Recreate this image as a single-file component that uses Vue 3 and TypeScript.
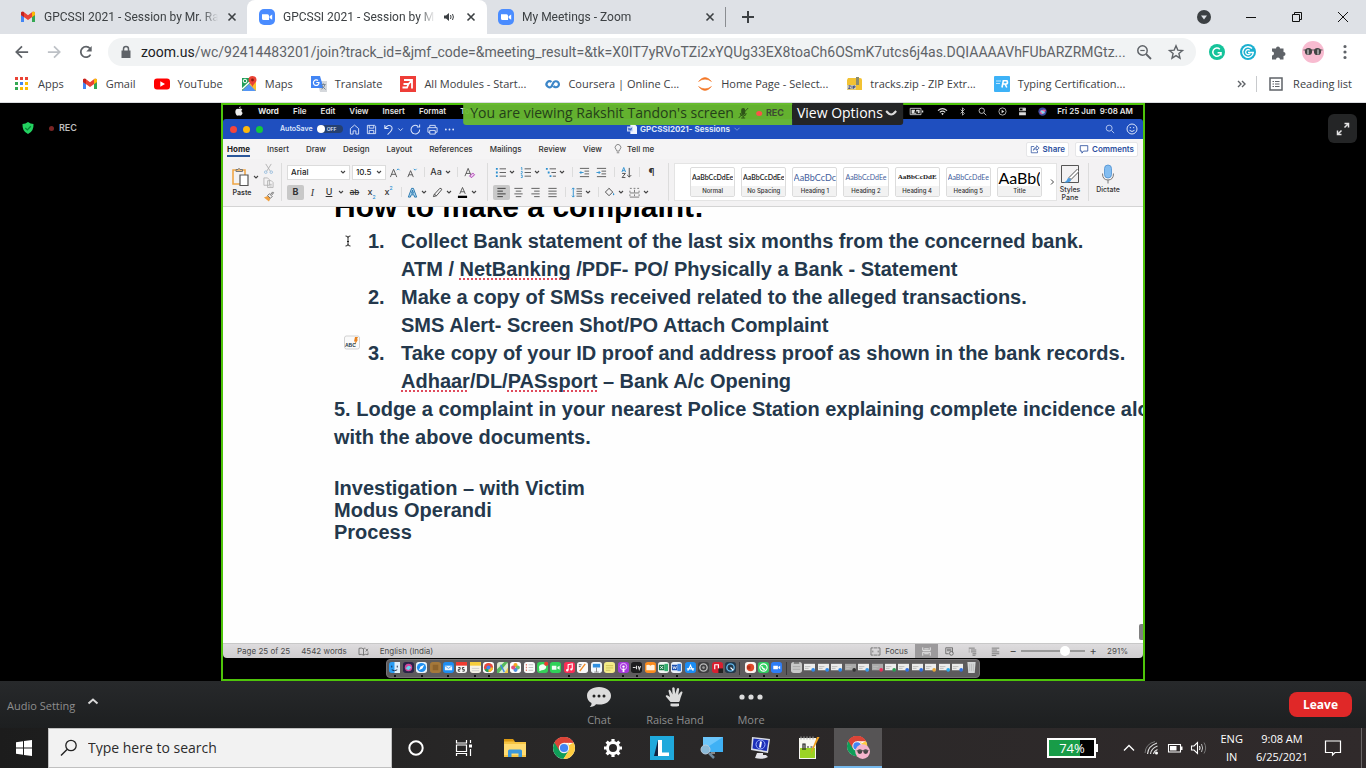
<script setup lang="ts">
import { h } from 'vue'

type Shape = [d: string, color: string, stroke?: number]
interface Art { box: string; shapes: Shape[] }

const INK = '#444'
const BLUE = '#2b8fd0'
const GREY = '#5f6368'

const circle = (cx: number, cy: number, r: number): string =>
  `M${cx - r} ${cy}a${r} ${r} 0 1 0 ${2 * r} 0a${r} ${r} 0 1 0 ${-2 * r} 0z`

const chromeShapes: Shape[] = [
  [circle(12, 12, 11), '#fff'],
  ['M12 12L2.5 6.5A11 11 0 0 1 21.5 6.5H12z', '#db4437'],
  ['M12 12L2.5 6.5A11 11 0 0 0 11.5 23L17 14.5z', '#0f9d58'],
  ['M12 12L21.5 6.6A11 11 0 0 1 11.4 23L16.8 14.5L16.5 7z', '#ffcd40'],
  ['M12 6.8H21.6A11 11 0 0 0 2.4 6.6L7.4 14.5z', '#db4437'],
  [circle(12, 12, 5.2), '#f1f1f1'],
  [circle(12, 12, 4.1), '#4285f4'],
]

const art: Record<string, Art> = {
  gmail: { box: '0 0 16 16', shapes: [
    ['M1 4v9h3V7.5z', '#4285f4'], ['M15 4v9h-3V7.5z', '#34a853'],
    ['M1 4.2C1 2.6 2.7 2.3 3.8 3L8 6.2 12.2 3C13.3 2.3 15 2.6 15 4.2V6L8 11 1 6z', '#ea4335'],
    ['M1 4.2C1 3 2.4 2.4 4 3.2V8L1 6z', '#c5221f'], ['M15 4.2C15 3 13.600 2.4 12 3.2V8l3-2z', '#fbbc04'],
  ] },
  zoom: { box: '0 0 16 16', shapes: [
    ['M5 0h6a5 5 0 0 1 5 5v6a5 5 0 0 1-5 5H5a5 5 0 0 1-5-5V5a5 5 0 0 1 5-5z', '#4a8cff'],
    ['M3 5.200h5.500a1.500 1.500 0 0 1 1.500 1.500V11H4.500A1.500 1.500 0 0 1 3 9.500zM10.600 7.200L13.200 5.400V10.800L10.600 9z', '#fff'],
  ] },
  close: { box: '0 0 12 12', shapes: [['M2.500 2.500L9.500 9.500M9.500 2.500L2.500 9.500', '#3c4043', 1.6]] },
  sound: { box: '0 0 12 12', shapes: [['M1 4.500h2L6 2v8L3 7.500H1z', '#3c4043'], ['M7.500 4Q8.600 6 7.500 8M9.500 3Q11.300 6 9.500 9', '#3c4043', 1]] },
  plus: { box: '0 0 14 14', shapes: [['M7 1v12M1 7h12', '#3c4043', 2]] },
  badge: { box: '0 0 14 14', shapes: [[circle(7, 7, 7), '#3c4043'], ['M4 5.500h6L7 9.500z', '#dee1e6']] },
  min: { box: '0 0 12 12', shapes: [['M1 6.500h10', '#111', 1]] },
  restore: { box: '0 0 12 12', shapes: [['M1.500 3.500h7v7h-7zM3.500 3.500v-2h7v7h-2', '#111', 1]] },
  shut: { box: '0 0 12 12', shapes: [['M1 1L11 11M11 1L1 11', '#111', 1]] },
  back: { box: '0 0 16 16', shapes: [['M15 8H2M8 1.500L1.500 8L8 14.500', '#5f6368', 2]] },
  forward: { box: '0 0 16 16', shapes: [['M1 8H14M8 1.500L14.500 8L8 14.500', '#bdc1c6', 2]] },
  reload: { box: '0 0 16 16', shapes: [['M13.200 11A6 6 0 1 1 12.600 4', '#5f6368', 2], ['M14.500 1v6.300H8.300z', '#5f6368']] },
  lock: { box: '0 0 12 14', shapes: [['M1.500 5.500h9v7.500h-9z', '#5f6368'], ['M3.500 6V4a2.500 2.500 0 0 1 5 0V6', '#5f6368', 1.500]] },
  zoomout: { box: '0 0 16 16', shapes: [[circle(6.500, 6.500, 4.700), GREY, 1.500], ['M10 10L15 15', GREY, 1.800], ['M4.300 6.500h4.400', GREY, 1.200]] },
  star: { box: '0 0 16 16', shapes: [['M8 1.800L9.800 6.100L14.500 6.500L10.900 9.500L12 14.200L8 11.600L4 14.200L5.100 9.500L1.500 6.500L6.200 6.100z', GREY, 1.400]] },
  gramA: { box: '0 0 16 16', shapes: [[circle(8, 8, 8), '#15c39a'], ['M10.800 5.200A4.100 4.100 0 1 0 12 8.800H8.600M12 8.800V11.500', '#fff', 1.500]] },
  gramB: { box: '0 0 16 16', shapes: [[circle(8, 8, 8), '#1bb0d0'], ['M12 4.500A5.300 5.300 0 1 0 13.300 8.500H8', '#fff', 1.400], ['M9.800 6.300A2.500 2.500 0 1 0 10.300 9.500', '#fff', 1.200]] },
  puzzle: { box: '0 0 16 16', shapes: [['M1 4.500H5A2 2 0 1 1 9 4.500H12.500V8A2 2 0 1 1 12.500 12V15.500H9A2 2 0 1 0 5 15.500H1V11.500A2 2 0 1 0 1 7.500z', GREY]] },
  face: { box: '0 0 22 22', shapes: [[circle(11, 11, 11), '#f8bbd0'], ['M1.500 9h19', '#555', 1], [circle(6.500, 10.500, 3.600), '#444'], [circle(15.500, 10.500, 3.600), '#444'], ['M5 8.500h2v5H5z M15 8.500h2v5h-2z', '#999']] },
  dots: { box: '0 0 4 16', shapes: [[circle(2, 2.500, 1.600) + circle(2, 8, 1.600) + circle(2, 13.500, 1.600), GREY]] },
  apps: { box: '0 0 16 16', shapes: [
    ['M1 1h3v3H1zM6 1h3v3H6zM11 1h3v3h-3z', '#ea4335'], ['M1 6h3v3H1z', '#34a853'], ['M6 6h3v3H6z', '#4285f4'],
    ['M11 6h3v3h-3z', '#fbbc04'], ['M1 11h3v3H1z', '#34a853'], ['M6 11h3v3H6zM11 11h3v3h-3z', '#fbbc04'],
  ] },
  youtube: { box: '0 0 16 16', shapes: [['M3 2.500h10a3 3 0 0 1 3 3v5a3 3 0 0 1-3 3H3a3 3 0 0 1-3-3v-5a3 3 0 0 1 3-3z', '#f00'], ['M6.300 5.200L11 8L6.300 10.800z', '#fff']] },
  maps: { box: '0 0 16 16', shapes: [
    ['M1 2h14v13H1z', '#1e9e58'], ['M1 15L15 2V15z', '#fbc02d'], ['M1 15L8 8L15 15z', '#5596f5'], ['M1 13L13 2', '#fff', 1.500],
    ['M11.500 0a4 4 0 0 1 4 4c0 2.500-3 3.500-4 7c-1-3.500-4-4.500-4-7a4 4 0 0 1 4-4z', '#ea4335'], [circle(11.500, 4, 1.400), '#8c1a10'], [circle(4, 5, 1.800), '#fff', 1],
  ] },
  translate: { box: '0 0 16 16', shapes: [['M6 5h10v11H9z', '#d5d8dc'], ['M0 0h9l3.500 12H0z', '#4285f4'], ['M7 4.500A2.800 2.800 0 1 0 8 6.500H5.300', '#fff', 1.200], ['M10.500 8.500h4M12.500 7.500v1M14 8.500Q13 12 10.500 13M11 10L14.500 13.500', '#7b8794', 1]] },
  modules: { box: '0 0 16 16', shapes: [['M0 0h16v16H0z', '#ee3e38'], ['M4 4H12V12.500M12 4L8.500 8H3.500M8.500 8L7 11.500H2.500', '#fff', 1.800]] },
  coursera: { box: '0 0 16 16', shapes: [['M7.500 6A3 3 0 1 0 7.500 10.500L9.500 6.500A3 3 0 1 1 9.500 10', '#3c86c8', 2.200]] },
  jupyter: { box: '0 0 16 16', shapes: [['M1.500 5.500Q8-2.500 14.500 5.500Q8 .8 1.500 5.500zM1.500 10.500Q8 18.500 14.500 10.500Q8 15.200 1.500 10.500z', '#f37726', 0.500], ['M1.500 5.500Q8-2.500 14.500 5.500Q8 .8 1.500 5.500zM1.500 10.500Q8 18.500 14.500 10.500Q8 15.200 1.500 10.500z', '#f37726']] },
  zip: { box: '0 0 16 16', shapes: [['M2 2h12a2 2 0 0 1 2 2v10H1V4z', '#f2c233'], ['M10 1h3v8h-3z', '#8b8b6e'], ['M1 9h9v4.500H1z', '#d9d3b0'], ['M2.500 9.800h2L2.500 12.500h2M6 9.800v2.800M7.500 12.800V10h1.500v1.300H7.500', '#3b4a8c', 0.900]] },
  typing: { box: '0 0 16 16', shapes: [['M1 0h14a1 1 0 0 1 1 1v14a1 1 0 0 1-1 1H1a1 1 0 0 1-1-1V1a1 1 0 0 1 1-1z', '#3db2f7'], ['M2 5h5M2 7.500h4', '#bfe5ff', 1.200], ['M8 11.500L9.300 4.800H13Q14.200 6.800 12.500 8H9M11 8L12.800 11.500', '#fff', 1.600]] },
  more: { box: '0 0 10 10', shapes: [['M1 2L4 5L1 8M5 2L8 5L5 8', GREY, 1.400]] },
  reading: { box: '0 0 14 14', shapes: [['M1 1h12v12H1z', GREY, 1.500], ['M3.500 4.500h1.500M3.500 7h1.500M3.500 9.500h1.500M6 4.500h4.500M6 7h4.500M6 9.500h4.500', GREY, 1.200]] },
  shield: { box: '0 0 12 12', shapes: [['M6 0Q8.500 1.800 11.500 2Q12 9.500 6 12Q0 9.500 .5 2Q3.500 1.800 6 0z', '#23d160'], ['M3.300 6L5.300 7.900L8.800 4.300', '#083', 1.300]] },
  expand: { box: '0 0 14 14', shapes: [['M8.500 1.500H12.500V5.500M12 2L8.500 5.500M5.500 12.500H1.500V8.500M2 12L5.500 8.500', '#e4e4e4', 1.500]] },
  apple: { box: '0 0 12 12', shapes: [['M6 3.500Q8 2.400 10 3.900Q7.700 6 10.400 8.300Q9 12 7.300 11.500Q6 11 4.700 11.500Q2.500 12 1.600 7.500Q1.500 2.800 6 3.500zM6 2.800Q6 .8 8 .2Q8.200 2.300 6 2.800z', '#eee']] },
  battery: { box: '0 0 16 10', shapes: [['M1 1.500h12v7H1z', '#ccc', 1], ['M2.500 3h4L5.500 6.500h3l-1 1H2.500zM8 3h3.500v4H9L10 5H7zM14 4h1.500v2H14z', '#ddd']] },
  wifi: { box: '0 0 12 10', shapes: [['M1 4Q6-.5 11 4M3 6Q6 3.300 9 6', '#ddd', 1.300], ['M4.500 7.300Q6 6.200 7.500 7.300L6 9.300z', '#ddd']] },
  bt: { box: '0 0 8 12', shapes: [['M1.500 3.500L6.500 8.500L4 11V1L6.500 3.500L1.500 8.500', '#ddd', 1]] },
  find: { box: '0 0 12 12', shapes: [[circle(5, 5, 3.600), '#ddd', 1.100], ['M7.800 7.800L11 11', '#ddd', 1.100]] },
  play: { box: '0 0 12 12', shapes: [[circle(6, 6, 4.800), '#ddd', 1], ['M4.800 3.800L8.300 6L4.800 8.200z', '#ddd']] },
  control: { box: '0 0 12 12', shapes: [['M2 1.500h8v3.500H2z', '#ddd', 1], ['M1.500 7h9v4h-9zM6 1.500h4v3H6z', '#ddd']] },
  siri: { box: '0 0 12 12', shapes: [[circle(6, 6, 5.500), '#3c4aa0'], ['M2 7Q5 2 10.500 4Q8 10 4 9.500z', '#e0609e'], ['M3 5Q7 4 9.500 8L6 9z', '#8ad8ef']] },
  home: { box: '0 0 12 12', shapes: [['M1.500 5L6 1.200L10.500 5V11H7.500V7.500h-3V11H1.500z', '#dbe5fa', 1]] },
  save: { box: '0 0 12 12', shapes: [['M1.500 1.500H9.500L10.500 2.500V10.500H1.500zM3.500 1.500V4.500H8.500V1.500M3.500 10.500V7H8.500V10.500', '#dbe5fa', 1]] },
  undo: { box: '0 0 12 12', shapes: [['M2 1V5H6M2 5Q6-.5 9.500 3Q11.500 6 5 11.500', '#dbe5fa', 1.100]] },
  redo: { box: '0 0 12 12', shapes: [['M10.500 6A4.700 4.700 0 1 1 8.500 2.300M10.500 0.500V3.200H7.500', '#dbe5fa', 1.100]] },
  print: { box: '0 0 12 12', shapes: [['M3 4V1.500H9V4M3 9H1V4H11V9H9M3 7H9V11H3z', '#dbe5fa', 1]] },
  ellipsis: { box: '0 0 12 12', shapes: [[circle(2, 6, 1) + circle(6, 6, 1) + circle(10, 6, 1), '#dbe5fa']] },
  docfile: { box: '0 0 12 12', shapes: [['M4 0h5l3 3v9H4z', '#f1f5ff'], ['M0 3h7v6H0z', '#c5d5f7'], ['M1.300 4.500L2.500 7.700L3.500 5L4.500 7.700L5.700 4.500', '#1e4dbb', 0.900]] },
  smile: { box: '0 0 12 12', shapes: [[circle(6, 6, 5), '#dbe5fa', 1], ['M3.500 7.300Q6 9.700 8.500 7.300M4.300 4v1.200M7.700 4v1.200', '#dbe5fa', 1]] },
  searchw: { box: '0 0 12 12', shapes: [[circle(5, 5, 3.600), '#b9cbf2', 1.100], ['M7.800 7.800L11 11', '#b9cbf2', 1.100]] },
  bulb: { box: '0 0 10 12', shapes: [['M3.500 8.500Q3.500 7.300 2.500 6.300A3.400 3.400 0 1 1 7.500 6.300Q6.500 7.300 6.500 8.500zM3.500 10.500H6.500', '#666', 0.900]] },
  share: { box: '0 0 12 12', shapes: [['M5 3H1.500V10.500H9V8M4 7.500Q4.500 4 8 4V2L11 4.800L8 7.500V5.800Q5.500 5.500 4 7.500z', '#2b4f9e', 0.900]] },
  comment: { box: '0 0 12 12', shapes: [['M1.500 2H10.500V8.500H5.500L3.500 11V8.500H1.500z', '#2b4f9e', 1]] },
  paste: { box: '0 0 20 20', shapes: [['M2 3h12v14H2z', '#f0a646', 1.600], ['M5 4.500V2.500H7Q8 0 9 2.500H11.500V4.500z', '#777', 1], ['M9 8h8v10.500H9z', '#fff'], ['M9 8h8v10.500H9z', '#555', 1.200]] },
  cut: { box: '0 0 12 12', shapes: [['M3 1L8 9M9 1L4 9', '#aaa', 0.900], [circle(3, 10, 1.400) + circle(9, 10, 1.400), '#8fb8dc', 0.900]] },
  copy: { box: '0 0 12 12', shapes: [['M1 1H5L7 3V9H1zM5 4H9L11 6V11.500H5zM7 8h2.500M7 9.800h2.500', '#b0b0b0', 0.900]] },
  brush: { box: '0 0 12 12', shapes: [['M1 7L5 5.500L8 8.500L6.500 11.500z', '#f0a040'], ['M5 5L7 3L8 4L10.500 1L11.500 2L9 5L10 6L8 8z', '#555', 0.900]] },
  growA: { box: '0 0 12 12', shapes: [['M1.500 11L5 2.500L8.500 11M2.700 8h4.600', INK, 0.900], ['M8.500 3.500L10 2L11.500 3.500', BLUE, 1]] },
  shrinkA: { box: '0 0 12 12', shapes: [['M2 11L5 4L8 11M3 8.500h4', INK, 0.900], ['M8.500 2L10 3.500L11.500 2', BLUE, 1]] },
  clear: { box: '0 0 12 12', shapes: [['M1 10L4.500 1.500L8 10M2.200 7h4.600', INK, 0.900], ['M6 10L9.500 6.500L11.500 8.500L8.500 11.500z', '#f0c8f0'], ['M6 10L9.500 6.500L11.500 8.500L8.500 11.500z', '#a83bb0', 1]] },
  effect: { box: '0 0 12 12', shapes: [['M1.500 11L5 1.500H7L10.500 11H8.300L7.500 8.500H4.500L3.700 11z', '#bfe0f4'], ['M1.500 11L5 1.500H7L10.500 11H8.300L7.500 8.500H4.500L3.700 11zM5 6.800H7L6 3.500z', '#1a6ea8', 1]] },
  pen: { box: '0 0 12 12', shapes: [['M2.500 8L8.500 1.500Q10.500 1 10.500 3L5 9.500zM2.500 8L1.500 10.500L5 9.500', INK, 1]] },
  color: { box: '0 0 12 12', shapes: [['M3 7.500L6 0.500L9 7.500M4 5.200h4', INK, 0.900], ['M1 9.500h10v2.500H1z', '#000']] },
  bullets: { box: '0 0 12 12', shapes: [['M1 1h2v2H1zM1 5h2v2H1zM1 9h2v2H1z', BLUE], ['M5 2h7M5 6h7M5 10h7', INK, 0.900]] },
  numbers: { box: '0 0 12 12', shapes: [['M1 1L2 .5V3.500M1 5H2.500V6L1 7.500H2.500M1 9H2.500V11.500H1', BLUE, 0.900], ['M5 2h7M5 6h7M5 10h7', INK, 0.900]] },
  levels: { box: '0 0 12 12', shapes: [['M1 1h2v2H1zM3 5h2v2H3zM5 9h2v2H5z', BLUE], ['M5 2h7M7 6h5M8.500 10h3.500', INK, 0.900]] },
  outdent: { box: '0 0 12 12', shapes: [['M1 1.500h10M6 4.500h5M6 7.500h5M1 10.500h10', INK, 0.900], ['M5 6H1M2.500 4.500L1 6L2.500 7.500', BLUE, 1]] },
  indent: { box: '0 0 12 12', shapes: [['M1 1.500h10M6 4.500h5M6 7.500h5M1 10.500h10', INK, 0.900], ['M.5 6H4.500M3 4.500L4.500 6L3 7.500', BLUE, 1]] },
  sort: { box: '0 0 12 12', shapes: [['M1 5.500L3 .5L5 5.500M1.800 4h2.400', BLUE, 1], ['M1.200 7H4.800L1.200 11.500H4.800M9 1V11M6.800 8.800L9 11L11.200 8.800', INK, 1]] },
  left: { box: '0 0 12 12', shapes: [['M1.500 1.500h9M1.500 4.500h6M1.500 7.500h9M1.500 10.500h6', '#222', 0.900]] },
  center: { box: '0 0 12 12', shapes: [['M1.500 1.500h9M3 4.500h6M1.500 7.500h9M3 10.500h6', INK, 0.900]] },
  right: { box: '0 0 12 12', shapes: [['M1.500 1.500h9M4.500 4.500h6M1.500 7.500h9M4.500 10.500h6', INK, 0.900]] },
  justify: { box: '0 0 12 12', shapes: [['M1.500 1.500h9M1.500 4.500h9M1.500 7.500h9M1.500 10.500h9', INK, 0.900]] },
  spacing: { box: '0 0 12 12', shapes: [['M2.500 1V11M1 2.500L2.500 1L4 2.500M1 9.500L2.500 11L4 9.500', BLUE, 1], ['M6 2h6M6 4.700h6M6 7.400h6M6 10h6', INK, 0.900]] },
  shading: { box: '0 0 12 12', shapes: [['M5 1L9.500 5.500L5.500 9.500L1.500 5.500L5.500 1.500', INK, 1], ['M10.500 6Q12 9 10.500 9Q9 9 10.500 6z', BLUE]] },
  borders: { box: '0 0 12 12', shapes: [['M1 1.500h2M5 1.500h2M9 1.500h2M1 4v2M11 4v2M6 3v3M1 8v2M6 8v2M11 8v2M1 6.500h10M1 11h10', '#666', 0.900]] },
  stylepane: { box: '0 0 20 20', shapes: [['M1.500 1.500H18.500V18.500H1.500z', '#555', 1], ['M17.500 5L9 13.500L11 15.500L18.500 8z', '#fff'], ['M17.500 5L9 13.500L11 15.500L18.500 8', '#555', 1], ['M4 18.500Q7 17 8 14Q11 14 11 16.500Q9.500 19 4 18.500z', '#4a9be0']] },
  mic: { box: '0 0 16 20', shapes: [['M8 1a3.500 3.500 0 0 1 3.500 3.500v6a3.500 3.500 0 0 1-7 0v-6A3.500 3.500 0 0 1 8 1z', '#83bdf0'], ['M8 1a3.500 3.500 0 0 1 3.500 3.500v6a3.500 3.500 0 0 1-7 0v-6A3.500 3.500 0 0 1 8 1z', '#4b8fd0', 0.800], ['M2.500 9.500Q2.500 16 8 16Q13.500 16 13.500 9.500M8 16V19.500', '#777', 1]] },
  chev: { box: '0 0 8 8', shapes: [['M2 3L4 5L6 3', '#444', 1.100]] },
  chevw: { box: '0 0 8 8', shapes: [['M1.500 2.800L4 5.300L6.500 2.800', '#c8d6f5', 1.100]] },
  chevfaint: { box: '0 0 8 8', shapes: [['M1.500 2.800L4 5.300L6.500 2.800', '#6f8fda', 1]] },
  chevr: { box: '0 0 8 8', shapes: [['M3 1.500L5.500 4L3 6.500', '#444', 1]] },
  chevbig: { box: '0 0 12 12', shapes: [['M1 4Q4 7.500 6 7.500Q8 7.500 11 4', '#ddd', 2]] },
  up: { box: '0 0 12 12', shapes: [['M1.500 7.500L6 3.500L10.500 7.500', '#d8d8d8', 2]] },
  mute: { box: '0 0 12 12', shapes: [['M6 1a2 2 0 0 1 2 2v3a2 2 0 0 1-4 0V3a2 2 0 0 1 2-2z', '#2e5418'], ['M3 6Q3 9 6 9Q9 9 9 6M6 9v2M4 11h4M11 1L1.500 11', '#2e5418', 1]] },
  book: { box: '0 0 12 10', shapes: [['M6 2Q3.500.5 1 1.500V8.500Q3.500 7.500 6 9zM6 2Q7 1.200 8 1.200M6 9Q8 7.500 11 8.500V6M8.500 2L11 5M11 2L8.500 5', '#666', 0.900]] },
  focus: { box: '0 0 12 10', shapes: [['M3.500 1H1V9H3.500M8.500 1H11V9H8.500M4 1h4M4 9h4', '#666', 0.900], ['M3 4v2M9 4v2', '#666', 0.900]] },
  vprint: { box: '0 0 12 12', shapes: [['M1 .5V4.500H11V.5M1 11.500V7H11V11.500M3 2.500h6M3 9h6', '#fff', 1]] },
  vweb: { box: '0 0 12 12', shapes: [['M1 1h9v6M1 1V9H5M2.500 3h6M2.500 5h6', '#555', 1], [circle(8.500, 8.500, 2.500), '#555', 1]] },
  voutline: { box: '0 0 12 12', shapes: [['M1 1.500h8M4 4h7M4 6.500h7M6 9h5M6 11h4M1 4h1M1 6.500h1', '#555', 0.900]] },
  vdraft: { box: '0 0 12 12', shapes: [['M1 1.500h10M1 4h7M1 6.500h10M1 9h10M1 11.300h6', '#555', 0.900]] },
  ibeam: { box: '0 0 8 12', shapes: [['M1.500 1Q4 1 4 2.500Q4 1 6.500 1M4 2V10M1.500 11Q4 11 4 9.500Q4 11 6.500 11M3 6.500h2', '#111', 0.900]] },
  bolt: { box: '0 0 16 14', shapes: [['M2 .5H13A2 2 0 0 1 15.500 2.500V11.500A2 2 0 0 1 13.500 13.500H2.500A2 2 0 0 1 .5 11.500V2.500A2 2 0 0 1 2 .5z', '#fafafa'], ['M2 .5H13A2 2 0 0 1 15.500 2.500V11.500A2 2 0 0 1 13.500 13.500H2.500A2 2 0 0 1 .5 11.500V2.500A2 2 0 0 1 2 .5z', '#c8c8c8', 0.800], ['M11 1.500H14L12.800 4H14L10.500 10L11.500 6H10z', '#e8821e']] },
  chat: { box: '0 0 24 20', shapes: [['M12 0C19 0 24 3.500 24 8.700C24 14 19 17.500 12 17.500L9 17.300Q7 20 2.800 20Q5 18.500 4.500 16Q0 13.500 0 8.700C0 3.500 5 0 12 0z', '#dcdcdc'], [circle(7, 9, 1.500) + circle(12, 9, 1.500) + circle(17, 9, 1.500), '#222']] },
  hand: { box: '0 0 20 20', shapes: [['M5.500 15Q3 12 .8 9.500Q.5 7.500 2.800 8.500L5 10L3.500 4Q4 2 5.500 3.500L7.500 7.500L7.200 1Q8.500-.5 9.600 1L10.200 7L12 1.500Q13.500.5 14.200 2L13.200 8L16 4.500Q17.500 4 17.500 5.500L15.500 11Q15 14 14 15z', '#dcdcdc'], ['M5.500 16.500h8.500v2.500Q9.500 20 5.500 19z', '#dcdcdc']] },
  moredots: { box: '0 0 24 8', shapes: [[circle(3, 4, 2.600) + circle(12, 4, 2.600) + circle(21, 4, 2.600), '#dcdcdc']] },
  windows: { box: '0 0 16 16', shapes: [['M0 2.300L7 1.300V7.500H0zM8 1.100L16 0V7.500H8zM0 8.500H7V14.700L0 13.700zM8 8.500H16V16L8 14.900z', '#fff']] },
  search: { box: '0 0 18 18', shapes: [[circle(11, 6.500, 5.200), '#222', 1.300], ['M7 10.500L1 16.500', '#222', 1.400]] },
  cortana: { box: '0 0 24 24', shapes: [[circle(12, 12, 6.700), '#fff', 2]] },
  taskview: { box: '0 0 24 24', shapes: [['M4.500 4v3H14.500V4M4.500 20V17.500H14.500V20M4.500 9h10v6.500h-10z', '#fff', 1.200], ['M18.500 4v3M18.500 13v7', '#fff', 1.200], ['M17 8.500h3v3h-3z', '#fff']] },
  explorer: { box: '0 0 24 24', shapes: [['M1 4h9l2 2h11v15H1z', '#f6c544'], ['M1 3h9l2 2.500H1z', '#dc9a12'], ['M1 8h22v11H1z', '#ffdc72'], ['M5 21V15Q5 13.500 6.500 13.500h11Q19 13.500 19 15V21H15.500V17.500H8.500V21z', '#3a97da']] },
  chrome: { box: '0 0 24 24', shapes: chromeShapes },
  chromeuser: { box: '0 0 26 26', shapes: [...chromeShapes, [circle(18, 18, 8), '#f5b5cd'], [circle(15, 18, 2.600) + circle(21.300, 18, 2.600), '#444'], ['M11.500 17h13', '#555', 1]] },
  gear: { box: '0 0 24 24', shapes: [[circle(12, 12, 5.500), '#fff', 3], ['M12 3v3M12 18v3M3 12h3M18 12h3M5.600 5.600L8 8M16 16L18.400 18.400M18.400 5.600L16 8M8 16L5.600 18.400', '#fff', 3.200]] },
  lapp: { box: '0 0 24 24', shapes: [['M0 0h24v24H0z', '#1fa9dc'], ['M8 4L4 20H12z', '#14213f'], ['M8 4h4v12.500h7V20H8z', '#fff']] },
  monitor: { box: '0 0 24 24', shapes: [['M4 1h20v15H4z', '#3fb1f5'], ['M4 1h20L4 14z', '#6cc6fb'], ['M12 16h4v2h-4z', '#888'], ['M10 17L15 22', '#6e8ba0', 2.500], [circle(6.500, 13.500, 4.500), '#8bbad8'], [circle(6.500, 13.500, 4.500), '#bcd', 1]] },
  info: { box: '0 0 24 24', shapes: [['M4 1L22 3L20 17L3 14z', '#d9dde6'], ['M5.500 2.500L20.500 4.300L18.800 15L4.500 12.500z', '#1c2fb8'], [circle(12.500, 8.500, 4.500), '#9db2ff', 1], ['M13 5.500L12 11.500', '#fff', 2], ['M9 17h6v2h3l2 2Q14 24 7 22z', '#e4e4ea']] },
  notepad: { box: '0 0 24 24', shapes: [['M2 2h17v21H2z', '#f7f7f2'], ['M3 12h15v10H3z', '#9bd324'], ['M4 .5v3M7 .5v3M10 .5v3M13 .5v3M16 .5v3', '#aaa', 1], ['M6 14V8h2v6M10 11h2M13.500 11h2', '#222', 1.200], ['M22.500 1L16 14L14 18L15 13L20 1z', '#f0a020']] },
  tray: { box: '0 0 16 16', shapes: [['M3 10.500L8 5.500L13 10.500', '#fff', 1.300]] },
  traywifi: { box: '0 0 16 16', shapes: [['M3.500 14Q4 6 13 3M6.500 14Q7 8.500 13.500 6M9.500 14Q10 11 13.500 9.500', '#ddd', 1.200], [circle(12.500, 13, 1.500), '#fff'], ['M1 13Q1.500 4 11 1.500', '#777', 1]] },
  traybat: { box: '0 0 16 16', shapes: [['M1.500 4.500H13.500V12H1.500z', '#fff', 1.100], ['M3 6H9.500V10.500H3zM14 6.500H15.500V10H14z', '#fff']] },
  traysound: { box: '0 0 18 16', shapes: [['M1.500 6H4L7.500 2.500V13.500L4 10H1.500z', '#fff', 1.100], ['M9.500 6Q10.500 8 9.500 10', '#fff', 1.100], ['M11.500 4Q13.800 8 11.500 12', '#bbb', 1], ['M14 2.500Q17.300 8 14 13.500', '#777', 1]] },
  notice: { box: '0 0 18 18', shapes: [['M1.500 2H16.500V13.500H11L8.500 16V13.500H1.500z', '#fff', 1.200]] },
}

// Renders one entry of the art table.
const Glyph = (props: { name: string }) =>
  h('svg', { viewBox: art[props.name].box, 'aria-hidden': 'true', class: 'glyph' },
    art[props.name].shapes.map(([d, color, stroke]) =>
      h('path', stroke ? { d, fill: 'none', stroke: color, 'stroke-width': stroke } : { d, fill: color })))
Glyph.props = ['name']

const tabs = [
  { icon: 'gmail', title: 'GPCSSI 2021 - Session by Mr. Rak', active: false, sound: false },
  { icon: 'zoom', title: 'GPCSSI 2021 - Session by Mr.', active: true, sound: true },
  { icon: 'zoom', title: 'My Meetings - Zoom', active: false, sound: false },
]

const bookmarks = [
  { icon: 'apps', label: 'Apps' }, { icon: 'gmail', label: 'Gmail' }, { icon: 'youtube', label: 'YouTube' },
  { icon: 'maps', label: 'Maps' }, { icon: 'translate', label: 'Translate' }, { icon: 'modules', label: 'All Modules - Start...' },
  { icon: 'coursera', label: 'Coursera | Online C...' }, { icon: 'jupyter', label: 'Home Page - Select...' },
  { icon: 'zip', label: 'tracks.zip - ZIP Extr...' }, { icon: 'typing', label: 'Typing Certification...' },
]

const url = '/wc/92414483201/join?track_id=&jmf_code=&meeting_result=&tk=X0IT7yRVoTZi2xYQUg33EX8toaCh6OSmK7utcs6j4as.DQIAAAAVhFUbARZRMGtz...'

const menus = ['Word', 'File', 'Edit', 'View', 'Insert', 'Format', 'Tools']
const menuIcons = ['battery', 'wifi', 'bt', 'find', 'play', 'control', 'siri']
const ribbonTabs = ['Home', 'Insert', 'Draw', 'Design', 'Layout', 'References', 'Mailings', 'Review', 'View']

interface Tool { id: string; text?: string; drop?: boolean; on?: boolean }
const SEP: Tool = { id: 'sep' }
const sizeTools: Tool[] = [{ id: 'growA' }, { id: 'shrinkA' }, SEP, { id: 'case', text: 'Aa', drop: true }, SEP, { id: 'clear' }]
const fontTools: Tool[] = [
  { id: 'bold', text: 'B', on: true }, { id: 'italic', text: 'I' }, { id: 'underline', text: 'U', drop: true },
  { id: 'strike', text: 'ab' }, { id: 'sub', text: 'x' }, { id: 'sup', text: 'x' }, SEP,
  { id: 'effect', drop: true }, { id: 'pen', drop: true }, { id: 'color', drop: true },
]
const listTools: Tool[] = [
  { id: 'bullets', drop: true }, { id: 'numbers', drop: true }, { id: 'levels', drop: true }, SEP,
  { id: 'outdent' }, { id: 'indent' }, SEP, { id: 'sort' }, SEP, { id: 'pilcrow', text: '¶' },
]
const alignTools: Tool[] = [
  { id: 'left', on: true }, { id: 'center' }, { id: 'right' }, { id: 'justify' }, SEP,
  { id: 'spacing', drop: true }, SEP, { id: 'shading', drop: true }, { id: 'borders', drop: true },
]
const styles = [
  { name: 'Normal', sample: 'AaBbCcDdEe', kind: 'plain' }, { name: 'No Spacing', sample: 'AaBbCcDdEe', kind: 'plain' },
  { name: 'Heading 1', sample: 'AaBbCcDc', kind: 'h1' }, { name: 'Heading 2', sample: 'AaBbCcDdEe', kind: 'h2' },
  { name: 'Heading 4', sample: 'AaBbCcDdE', kind: 'h4' }, { name: 'Heading 5', sample: 'AaBbCcDdEe', kind: 'h5' },
  { name: 'Title', sample: 'AaBb(', kind: 'title' },
]

interface DockItem { bg: string; marks?: Shape[]; dot?: boolean; kind?: 'sep' | 'window' | 'bare' }
const dock: DockItem[] = [
  { bg: '#2a9df4', marks: [['M6 0h6v12H6z', '#dfeefa'], ['M3 4v2M9 4v2M3 8.500Q6 10.500 9 8.500', '#124', 1]], dot: true },
  { bg: '#2b2347', marks: [[circle(6, 6, 4), '#d2479b'], ['M3 7Q6 2 9 6L6 9z', '#68d5ee']] },
  { bg: '#e8f2fb', marks: [[circle(6, 6, 5), '#1f8ff0'], ['M9 3L7 7L3 9L5 5z', '#fff']], dot: true },
  { bg: '#a5783a', marks: [['M3 3h6v6H3z', '#8d632c']] },
  { bg: '#1e8df2', marks: [['M2 4h8v5H2z', '#e8f4ff'], ['M2 4L6 7L10 4', '#5aa9ee', 1]], dot: true },
  { bg: '#f7f7f7', marks: [['M0 0h12v4H0z', '#ee3b30'], ['M2.500 6h2v2h-2v2h2M9 6H7v2h2v2H7', '#333', 1]] },
  { bg: '#f5f2e6', marks: [['M0 0h12v4H0z', '#f5cd3c'], ['M2 7h8M2 9.500h8', '#ccc', 1]], dot: true },
  { bg: '#fff', marks: [[circle(6, 6, 5), '#e74a3c'], ['M6 6L1.500 8.500A5 5 0 0 0 6.500 11z', '#1ea362'], ['M6 6L11 6A5 5 0 0 1 6 11z', '#fbc02d'], [circle(6, 6, 2.300), '#4285f4']], dot: true },
  { bg: '#dcebd0', marks: [['M0 8L8 0H12L2 12H0z', '#56b95c'], ['M8 12L12 6V12z', '#f0c94b'], ['M4 3L8 11', '#3f87e8', 1.500]] },
  { bg: '#fff', marks: [[circle(6, 3.500, 2.300), '#f5a623'], [circle(8.500, 6, 2.300), '#6ac36a'], [circle(6, 8.500, 2.300), '#4a90e2'], [circle(3.500, 6, 2.300), '#e0507a']] },
  { bg: '#fafafa', marks: [['M2 3h1M2 6h1M2 9h1', '#e0503a', 1.500], ['M5 3h5M5 6h5M5 9h5', '#bbb', 1]] },
  { bg: '#35d058', marks: [['M6 2.500Q10.500 3 10 6Q9 9 5 9L2.500 10V8Q1 3 6 2.500z', '#f0fff3'], [circle(10, 2, 2.300), '#f03a2e']] },
  { bg: '#2fd158', marks: [['M2 4h5v4.500H2zM8 5.500L10.500 4V8.500L8 7z', '#f0fff3']] },
  { bg: '#fb2d55', marks: [['M4.500 9V3L9 2V8', '#fff', 1.200], [circle(3.500, 9, 1.300) + circle(8, 8, 1.300), '#fff']], dot: true },
  { bg: '#fafafa', marks: [['M3 10L9 2', '#f08a24', 1.500], ['M2 3h3M2 5h2', '#555', 1]] },
  { bg: '#f3f8fd', marks: [['M2 2h8v4H2z', '#2f8fe0'], ['M6 6V11M3.500 11h5', '#888', 1]] },
  { bg: '#f4ec88', marks: [['M2 4h8M2 6.500h8M2 9h5', '#c9bd52', 1]] },
  { bg: '#a537dc', marks: [[circle(6, 5, 3.500), '#edc8ff', 1], [circle(6, 5, 1.300), '#fff'], ['M5 7h2v4H5z', '#fff']], dot: true },
  { bg: '#1d1d1f', marks: [['M2 6h3M6 4v4M8 4.500L9 8L10.500 4.500', '#ddd', 1.200]], dot: true },
  { bg: '#fb8c1e', marks: [['M1.500 3.500Q4 2.500 6 4Q8 2.500 10.500 3.500V9H1.500z', '#fff3e2']] },
  { bg: '#f2f7f3', marks: [['M1 3h6v6H1z', '#157a44'], ['M7 2h4v8H7z', '#34b06f'], ['M2.500 4.500L5.500 7.500M5.500 4.500L2.500 7.500', '#fff', 1]], dot: true },
  { bg: '#edf3fb', marks: [['M1 3h6v6H1z', '#1c4fb0'], ['M7 2h4v8H7z', '#3c82e0'], ['M2 4.500L3 7.500L4 5L5 7.500L6 4.500', '#fff', 0.800]], dot: true },
  { bg: '#1b8df5', marks: [['M3 9.500L6.500 3M9 9.500L5.500 3M2 7.500h8', '#fff', 1.200]] },
  { bg: '#3e3e40', marks: [[circle(6, 6, 4), '#bbb', 1.500], [circle(6, 6, 1.500), '#999']] },
  { bg: '#d81f30', marks: [['M3 8V3H7V7', '#fff', 1.300], ['M7 7h5v5H7z', '#222']] },
  { bg: '#22384a', marks: [[circle(6, 6, 4), '#64b8ec', 1.500], ['M6 6L9 9', '#fff', 1.200]] },
  { bg: 'none', kind: 'sep' },
  { bg: '#fbf3f0', marks: [[circle(6, 6, 4), '#e0492a'], ['M2 4h4v4H2z', '#b8321a']], dot: true },
  { bg: '#2fcf5f', marks: [[circle(6, 6, 4), '#fff', 1.200], ['M4 4.500Q5 8 8 8', '#fff', 1.500]], dot: true },
  { bg: '#2f7df6', marks: [['M2.500 4h5v4h-5zM8 5.500L10 4V8L8 6.500z', '#fff']], dot: true },
  { bg: 'none', kind: 'sep' },
  { bg: '#c9c9c9', marks: [['M3 0h6v2H3z', '#777'], ['M2 5h8M2 8h8', '#aaa', 1]] },
  ...['#2f88e8', '#2f88e8', '#2f88e8', '#333', '#3b9ae8', '#e82f5a', '#2a9d50', '#2f6fe0', '#2f6fe0', '#e8a83a', '#2fa9e8', '#2f6fe0']
    .map((c, i): DockItem => ({ bg: i === 3 || i === 5 ? '#aaa' : '#ececec', kind: 'window', marks: [['M1 5h6M1 7h4', '#bbb', 1], [circle(10, 8.500, 2), c]] })),
  { bg: 'none', kind: 'bare', marks: [['M1.500 0h9L9.500 12h-7z', '#d4d6d8'], ['M4 2v8M6 2v8M8 2v8', '#aaa', 0.600]] },
]

const taskApps = ['explorer', 'chrome', 'gear', 'lapp', 'monitor', 'info', 'notepad', 'chromeuser']
</script>

<template>
  <div class="screen">
    <header class="browser">
      <div class="tabstrip">
        <div v-for="(t, i) in tabs" :key="i" class="tab" :class="{ active: t.active, last: i === 2 }">
          <Glyph :name="t.icon" class="i16" />
          <span class="tab-title">{{ t.title }}</span>
          <Glyph v-if="t.sound" name="sound" class="i12 tab-sound" />
          <button class="bare tab-close" aria-label="Close tab"><Glyph name="close" class="i12" /></button>
        </div>
        <span class="tab-line"></span>
        <button class="bare new-tab" aria-label="New tab"><Glyph name="plus" class="i14" /></button>
        <div class="win-buttons">
          <button class="bare" aria-label="Search tabs"><Glyph name="badge" class="i14" /></button>
          <button class="bare" aria-label="Minimize"><Glyph name="min" class="i12" /></button>
          <button class="bare" aria-label="Restore"><Glyph name="restore" class="i12" /></button>
          <button class="bare" aria-label="Close"><Glyph name="shut" class="i12" /></button>
        </div>
      </div>

      <div class="toolbar">
        <button class="bare" aria-label="Back"><Glyph name="back" class="i14" /></button>
        <button class="bare" aria-label="Forward"><Glyph name="forward" class="i14" /></button>
        <button class="bare" aria-label="Reload"><Glyph name="reload" class="i14" /></button>
        <label class="address">
          <Glyph name="lock" class="lock" />
          <span class="host">zoom.us</span>
          <input type="text" :value="url" aria-label="Address" />
          <Glyph name="zoomout" class="i16 zoom-out" />
          <Glyph name="star" class="i16 star" />
        </label>
        <div class="extensions">
          <button class="bare" aria-label="Grammarly"><Glyph name="gramA" class="i16" /></button>
          <button class="bare" aria-label="Go"><Glyph name="gramB" class="i16" /></button>
          <button class="bare" aria-label="Extensions"><Glyph name="puzzle" class="i16" /></button>
          <button class="bare" aria-label="Profile"><Glyph name="face" class="i22" /></button>
          <button class="bare" aria-label="Menu"><Glyph name="dots" class="i4" /></button>
        </div>
      </div>

      <nav class="bookmarks">
        <a v-for="b in bookmarks" :key="b.label" href="#" class="bookmark"><Glyph :name="b.icon" class="i16" />{{ b.label }}</a>
        <button class="bare overflow" aria-label="More bookmarks"><Glyph name="more" class="i10" /></button>
        <span class="book-line"></span>
        <button class="bare reading"><Glyph name="reading" class="i14" />Reading list</button>
      </nav>
    </header>

    <main class="meeting">
      <div class="rec-badge"><Glyph name="shield" class="i12" /><i class="rec-dot"></i>REC</div>
      <button class="bare expand" aria-label="Full screen"><Glyph name="expand" class="i14" /></button>

      <section class="share">
        <div class="mac-menu">
          <Glyph name="apple" class="i10" />
          <span v-for="m in menus" :key="m" class="mac-item">{{ m }}</span>
          <div class="mac-right">
            <Glyph v-for="m in menuIcons" :key="m" :name="m" class="mac-icon" />
            <span>Fri 25 Jun&nbsp; 9:08 AM</span>
          </div>
        </div>

        <div class="word-title">
          <div class="word-left">
            <i class="light red"></i><i class="light amber"></i><i class="light green"></i>
            <label class="autosave">AutoSave <input type="checkbox" /><span class="switch">OFF</span></label>
            <Glyph name="home" class="i12" /><Glyph name="save" class="i12" />
            <span class="undo"><Glyph name="undo" class="i12" /><Glyph name="chevw" class="i8" /></span>
            <Glyph name="redo" class="i12" /><Glyph name="print" class="i12" /><Glyph name="ellipsis" class="i12" />
          </div>
          <div class="word-name"><Glyph name="docfile" class="i10" />GPCSSI2021- Sessions<Glyph name="chevfaint" class="i8" /></div>
          <div class="word-right"><Glyph name="searchw" class="i10" /><Glyph name="smile" class="i12" /></div>
        </div>

        <div class="ribbon-tabs">
          <button v-for="(r, i) in ribbonTabs" :key="r" class="bare rtab" :class="{ current: i === 0 }">{{ r }}</button>
          <button class="bare rtab tell"><Glyph name="bulb" class="i10" />Tell me</button>
          <button class="bare pill share-pill"><Glyph name="share" class="i10" />Share</button>
          <button class="bare pill"><Glyph name="comment" class="i10" />Comments</button>
        </div>

        <div class="ribbon">
          <div class="clip-group">
            <button class="bare paste"><span class="paste-top"><Glyph name="paste" class="i20" /><Glyph name="chev" class="i8" /></span><span class="paste-name">Paste</span></button>
            <div class="clip-small"><Glyph name="cut" class="i10" /><Glyph name="copy" class="i12" /><Glyph name="brush" class="i12" /></div>
          </div>
          <span class="divide"></span>
          <div class="tool-group">
            <div class="tool-row">
              <span class="pick font-pick"><select aria-label="Font"><option>Arial</option></select><Glyph name="chev" class="i8" /></span>
              <span class="pick size-pick"><select aria-label="Font size"><option>10.5</option></select><Glyph name="chev" class="i8" /></span>
              <template v-for="(t, i) in sizeTools" :key="i">
                <span v-if="t.id === 'sep'" class="sep"></span>
                <button v-else class="bare tool" :class="[t.id, { drop: t.drop }]" :aria-label="t.id">
                  <span v-if="t.text">{{ t.text }}</span><Glyph v-else :name="t.id" class="i12" /><Glyph v-if="t.drop" name="chev" class="i8" />
                </button>
              </template>
            </div>
            <div class="tool-row">
              <template v-for="(t, i) in fontTools" :key="i">
                <span v-if="t.id === 'sep'" class="sep"></span>
                <button v-else class="bare tool" :class="[t.id, { drop: t.drop, on: t.on }]" :aria-label="t.id">
                  <span v-if="t.text">{{ t.text }}</span><Glyph v-else :name="t.id" class="i12" />
                  <small v-if="t.id === 'sub' || t.id === 'sup'">2</small><Glyph v-if="t.drop" name="chev" class="i8" />
                </button>
              </template>
            </div>
          </div>
          <span class="divide"></span>
          <div class="tool-group">
            <div v-for="(row, r) in [listTools, alignTools]" :key="r" class="tool-row">
              <template v-for="(t, i) in row" :key="i">
                <span v-if="t.id === 'sep'" class="sep"></span>
                <button v-else class="bare tool" :class="[t.id, { drop: t.drop, on: t.on }]" :aria-label="t.id">
                  <span v-if="t.text">{{ t.text }}</span><Glyph v-else :name="t.id" class="i12" /><Glyph v-if="t.drop" name="chev" class="i8" />
                </button>
              </template>
            </div>
          </div>
          <span class="divide wide"></span>
          <div class="gallery">
            <button v-for="s in styles" :key="s.name" class="bare style" :class="s.kind">
              <span class="sample">{{ s.sample }}</span><span class="style-name">{{ s.name }}</span>
            </button>
            <Glyph name="chevr" class="i8" />
          </div>
          <button class="bare big"><Glyph name="stylepane" class="i20" /><span>Styles<br />Pane</span></button>
          <span class="divide"></span>
          <button class="bare big dictate"><Glyph name="mic" class="i20" /><span>Dictate</span></button>
        </div>

        <article class="document">
          <h1>How to make a complaint:</h1>
          <ol>
            <li><span class="num">1.</span><div>Collect Bank statement of the last six months from the concerned bank.<br />ATM / <u>NetBanking</u> /PDF- PO/ Physically a Bank - Statement</div></li>
            <li><span class="num">2.</span><div>Make a copy of SMSs received related to the alleged transactions.<br />SMS Alert- Screen Shot/PO Attach Complaint</div></li>
            <li><span class="num">3.</span><div>Take copy of your ID proof and address proof as shown in the bank records.<br /><u>Adhaar</u>/DL/<u>PASsport</u> – Bank A/c Opening</div></li>
          </ol>
          <p>5. Lodge a complaint in your nearest Police Station explaining complete incidence along<br />with the above documents.</p>
          <p class="notes">Investigation – with Victim<br />Modus Operandi<br />Process</p>
          <Glyph name="ibeam" class="ibeam" />
          <span class="fix"><Glyph name="bolt" class="fix-box" /><b>ABC</b></span>
          <i class="thumb"></i>
        </article>

        <footer class="status">
          <span>Page 25 of 25</span><span>4542 words</span><Glyph name="book" class="i12" /><span>English (India)</span>
          <div class="status-right">
            <button class="bare focus"><Glyph name="focus" class="i12" />Focus</button>
            <button class="bare view on" aria-label="Print layout"><Glyph name="vprint" class="i10" /></button>
            <button class="bare view" aria-label="Web layout"><Glyph name="vweb" class="i12" /></button>
            <button class="bare view" aria-label="Outline"><Glyph name="voutline" class="i10" /></button>
            <button class="bare view" aria-label="Draft"><Glyph name="vdraft" class="i10" /></button>
            <button class="bare step">−</button>
            <input type="range" min="0" max="100" value="73" aria-label="Zoom level" />
            <button class="bare step">+</button>
            <span class="percent">291%</span>
          </div>
        </footer>

        <div class="dock-area">
          <div class="dock">
            <template v-for="(d, i) in dock" :key="i">
              <span v-if="d.kind === 'sep'" class="dock-sep"></span>
              <span v-else class="dock-item" :class="{ running: d.dot }">
                <svg viewBox="0 0 12 12" class="dock-icon" aria-hidden="true">
                  <rect v-if="d.kind === 'window'" x="0" y="2" width="12" height="7" :fill="d.bg" />
                  <rect v-else-if="d.kind !== 'bare'" width="12" height="12" rx="3" :fill="d.bg" />
                  <path v-for="(m, j) in d.marks" :key="j" :d="m[0]" :fill="m[2] ? 'none' : m[1]" :stroke="m[2] ? m[1] : 'none'" :stroke-width="m[2] || 0" />
                </svg>
              </span>
            </template>
          </div>
        </div>
      </section>

      <div class="viewing">
        <span class="viewing-text">You are viewing Rakshit Tandon's screen<Glyph name="mute" class="i12" /><i class="rec-dot live"></i><b>REC</b></span>
        <button class="bare options">View Options<Glyph name="chevbig" class="i12" /></button>
      </div>
    </main>

    <div class="controls">
      <button class="bare audio">Audio Setting <Glyph name="up" class="i12" /></button>
      <div class="actions">
        <button class="bare action"><Glyph name="chat" class="chat" />Chat</button>
        <button class="bare action"><Glyph name="hand" class="i20" />Raise Hand</button>
        <button class="bare action"><Glyph name="moredots" class="moredots" />More</button>
      </div>
      <button class="bare leave">Leave</button>
    </div>

    <div class="taskbar">
      <button class="bare task" aria-label="Start"><Glyph name="windows" class="i16" /></button>
      <label class="task-search"><Glyph name="search" class="i18" /><input type="text" placeholder="Type here to search" aria-label="Type here to search" /></label>
      <button class="bare task" aria-label="Cortana"><Glyph name="cortana" class="i24" /></button>
      <button class="bare task" aria-label="Task view"><Glyph name="taskview" class="i24" /></button>
      <div class="task-apps">
        <button v-for="a in taskApps" :key="a" class="bare task" :class="{ open: a === 'chromeuser' }" :aria-label="a"><Glyph :name="a" class="i24" /></button>
      </div>
      <div class="tray">
        <span class="charge">74%</span>
        <button class="bare" aria-label="Show hidden icons"><Glyph name="tray" class="i16" /></button>
        <Glyph name="traywifi" class="i16" />
        <Glyph name="traybat" class="i16" />
        <Glyph name="traysound" class="i18" />
        <span class="lang">ENG<br />IN</span>
        <span class="clock">9:08 AM<br />6/25/2021</span>
        <button class="bare notice" aria-label="Notifications"><Glyph name="notice" class="i18" /></button>
        <span class="desk"></span>
      </div>
    </div>
  </div>
</template>

<style>
html, body { margin: 0; background: #000; }
</style>

<style scoped>
* { box-sizing: border-box; }
.screen { display: flex; flex-direction: column; min-height: 100vh; overflow: hidden; font: 12px/16px "Open Sans", "Noto Sans", sans-serif; color: #3c4043; background: #000; }
.bare { padding: 0; border: 0; background: none; font: inherit; color: inherit; display: flex; align-items: center; white-space: nowrap; }
.glyph { flex: none; display: block; overflow: visible; }
.i4 { width: 4px; height: 16px; } .i8 { width: 8px; height: 8px; } .i10 { width: 10px; height: 10px; }
.i12 { width: 12px; height: 12px; } .i14 { width: 14px; height: 14px; } .i16 { width: 16px; height: 16px; }
.i18 { width: 18px; height: 18px; } .i20 { width: 20px; height: 20px; } .i22 { width: 22px; height: 22px; } .i24 { width: 24px; height: 24px; }

.browser { background: #fff; border-bottom: 1px solid #dadce0; }
.tabstrip { display: flex; align-items: center; height: 34px; background: #dee1e6; }
.tab { display: flex; align-items: center; gap: 8px; width: 240px; height: 34px; padding: 0 10px 0 12px; font-family: Roboto, sans-serif; }
.tab:first-child { width: 247px; padding: 0 9px 0 20px; }
.tab.active { background: #fff; border-radius: 8px 8px 0 0; }
.tab.last { width: 238px; padding-left: 11px; padding-right: 9px; }
.tab-title { flex: 1; overflow: hidden; white-space: nowrap; mask-image: linear-gradient(to right, #000 calc(100% - 16px), transparent); }
.tab-sound { margin-right: 2px; }
.tab-line { width: 1px; height: 20px; background: #8a8d91; }
.new-tab { margin-left: 15px; }
.win-buttons { display: flex; align-items: center; gap: 34px; margin-left: auto; padding-right: 17px; }

.toolbar { display: flex; align-items: center; gap: 18px; height: 36px; padding: 0 15px; }
.address { flex: 1; display: flex; align-items: center; height: 28px; margin-left: -3px; padding: 0 12px 0 12px; border-radius: 14px; background: #f1f3f4; font: 14px/20px Roboto, sans-serif; }
.address .lock { width: 12px; height: 14px; margin-right: 9px; }
.host { color: #202124; }
.address input { flex: 1; min-width: 0; padding: 0; border: 0; outline: 0; background: none; font: inherit; color: #5f6368; text-overflow: ellipsis; }
.zoom-out { margin-left: 4px; }
.star { margin-left: 16px; }
.extensions { display: flex; align-items: center; gap: 15px; margin-left: -5px; }
.extensions .i4 { margin: 0 4px; }

.bookmarks { display: flex; align-items: center; height: 32px; padding: 0 14px 4px; font-size: 11px; }
.bookmark { display: flex; align-items: center; gap: 8px; margin-right: 18px; color: inherit; text-decoration: none; white-space: nowrap; }
.overflow { margin-left: auto; }
.book-line { width: 1px; height: 16px; margin: 0 12px 0 9px; background: #c8cacd; }
.reading { gap: 10px; }

.meeting { position: relative; flex: 1; display: flex; justify-content: center; padding: 0 221px; background: #000; }
.rec-badge { position: absolute; left: 22px; top: 19px; display: flex; align-items: center; font: 600 9px/12px Inter, sans-serif; color: #bdbdbd; }
.rec-dot { width: 5px; height: 5px; margin: 0 5px 0 15px; border-radius: 50%; background: #7a2525; }
.expand { position: absolute; right: 9px; top: 11px; width: 29px; height: 29px; justify-content: center; border-radius: 6px; background: #242526; }

.share { flex: 1; min-width: 0; display: flex; flex-direction: column; border: 2px solid #4ec40a; font: 500 8px/10px Inter, "Liberation Sans", sans-serif; }
.mac-menu { display: flex; align-items: center; gap: 14px; height: 14px; padding: 0 10px 2px 11px; color: #e4e4e4; font-weight: 600; }
.mac-item:nth-child(2) { font-weight: 700; }
.mac-right { display: flex; align-items: center; gap: 9px; margin-left: auto; }
.mac-icon { width: 11px; height: 9px; }
.mac-right .mac-icon:first-child { width: 15px; margin-right: 4px; }

.word-title { display: grid; grid-template-columns: 1fr auto 1fr; align-items: center; height: 20px; padding: 0 5px 0 7px; background: #1f4fbf; border-radius: 3px 3px 0 0; color: #dbe5fa; }
.word-left { display: flex; align-items: center; gap: 6px; }
.light { width: 7px; height: 7px; border-radius: 50%; }
.red { background: #f5453c; } .amber { background: #fdb80d; } .green { background: #14c83c; }
.autosave { display: flex; align-items: center; gap: 4px; margin: 0 0 0 11px; font-size: 7px; font-weight: 600; }
.autosave input { position: absolute; opacity: 0; width: 1px; height: 1px; margin: 0; }
.switch { display: flex; align-items: center; width: 26px; height: 8px; border-radius: 4px; background: #26406f; font-size: 5px; }
.switch::before { content: ""; width: 8px; height: 8px; margin-right: 2px; border-radius: 50%; background: #fff; }
.word-left .glyph { width: 11px; height: 11px; }
.undo { display: flex; align-items: center; gap: 3px; }
.undo .i8 { width: 7px; height: 7px; }
.word-name { display: flex; align-items: center; gap: 3px; font-weight: 700; }
.word-right { display: flex; align-items: center; justify-content: flex-end; gap: 11px; }

.ribbon-tabs { display: flex; align-items: center; gap: 17px; height: 20px; padding: 0 5px 0 4px; background: #f5f4f5; color: #333; }
.rtab { height: 20px; }
.rtab.current { font-weight: 700; color: #222; box-shadow: inset 0 -2px #f5f4f5, inset 0 -4px #2b579a; }
.tell { gap: 4px; margin-left: -6px; }
.pill { gap: 3px; height: 15px; padding: 0 3px; border: 1px solid #e6e6e8; border-radius: 2px; background: #fff; color: #2b4f9e; font-weight: 600; margin-left: -11px; }
.share-pill { margin-left: auto; }

.ribbon { display: flex; align-items: center; height: 48px; padding-bottom: 1px; background: #f3f2f3; border-bottom: 1px solid #d4d4d4; color: #333; }
.clip-group { display: flex; align-items: center; padding-left: 8px; }
.paste { flex-direction: column; align-items: flex-start; gap: 1px; font-size: 7px; font-weight: 600; line-height: 10px; }
.paste-top { display: flex; align-items: center; gap: 1px; }
.paste-name { width: 22px; text-align: center; }
.clip-small { display: flex; flex-direction: column; align-items: center; gap: 3px; margin-left: 3px; }
.clip-small .glyph { width: 11px; height: 11px; }
.divide { width: 1px; height: 38px; margin: 0 5px 0 7px; background: #dcdcdc; }
.divide.wide { margin: 0 5px 0 8px; }
.tool-group { display: flex; flex-direction: column; gap: 5px; }
.tool-row { display: flex; align-items: center; height: 15px; }
.pick { position: relative; display: flex; align-items: center; height: 15px; margin-right: 2px; padding-right: 2px; border: 1px solid #dcdcdc; background: #fff; }
.font-pick { width: 63px; } .size-pick { width: 34px; margin-right: 0; }
.pick select { flex: 1; min-width: 0; appearance: none; padding: 0 0 0 3px; border: 0; background: none; font: inherit; color: #222; }
.tool { width: 17px; height: 15px; justify-content: center; }
.tool.drop { width: 25px; justify-content: flex-start; padding-left: 2px; gap: 2px; }
.tool.drop > span { width: 12px; text-align: center; font-size: 9px; }
.tool .i12 { width: 11px; height: 11px; }
.tool.on { background: #c8c8c8; border-radius: 2px; }
.bold { font-weight: 700; font-size: 9px; }
.italic { font: italic 10px "Liberation Serif", serif; }
.underline > span { text-decoration: underline; }
.strike { text-decoration: line-through; }
.sub, .sup { font-size: 9px; }
.tool small { align-self: flex-end; font-size: 5px; line-height: 6px; color: #2b8fd0; }
.sup small { align-self: flex-start; }
.pilcrow { font-size: 10px; }
.sep { width: 1px; height: 10px; margin: 0 3px 0 4px; background: #dcdcdc; }
.gallery { flex: 1; min-width: 0; display: flex; align-items: center; gap: 6px; height: 38px; padding-left: 15px; background: #fff; border: 1px solid #e4e4e4; overflow: hidden; }
.style { flex: 1; min-width: 0; height: 30px; flex-direction: column; border: 1px solid #dcdcdc; border-radius: 2px; overflow: hidden; background: #fff; }
.sample { flex: 1; display: flex; align-items: center; max-width: 100%; overflow: hidden; color: #222; }
.style-name { width: 100%; height: 10px; background: #f2f2f2; font-size: 6px; font-weight: 500; text-align: center; }
.plain .sample { font: 600 7px Lato, sans-serif; }
.h1 .sample { font: 9px Lato, sans-serif; color: #44609c; }
.h2 .sample { font: 7px Lato, sans-serif; color: #44609c; }
.h4 .sample { font: 700 7px "Liberation Serif", serif; }
.h5 .sample { font: 7px Lato, sans-serif; color: #44609c; }
.title .sample { font: 16px Lato, sans-serif; color: #000; }
.big { flex-direction: column; align-self: flex-start; gap: 2px; width: 26px; padding-top: 5px; font-size: 7px; line-height: 8px; }
.dictate { width: 28px; margin-right: 21px; }
.big + .divide { margin: 0 5px; }

.document { position: relative; flex: 1; min-height: 0; padding-left: 111px; overflow: hidden; background: #fefefe; font: 700 20px/28px "Liberation Sans", Arial, sans-serif; color: #24384c; white-space: nowrap; }
.document h1 { margin: -17px 0 3px; font-size: 30px; line-height: 34px; color: #000; }
.document ol { margin: 0; padding: 0 0 0 34px; list-style: none; }
.document li { display: flex; }
.num { width: 33px; }
.document p { margin: 0; }
.document .notes { margin-top: 26px; line-height: 22px; }
.document u { text-decoration: underline dotted #e04a5c 2px; text-underline-offset: 2px; text-decoration-skip-ink: none; }
.ibeam { position: absolute; left: 121px; top: 28px; width: 8px; height: 12px; }
.fix { position: absolute; left: 121px; top: 128px; }
.fix-box { width: 16px; height: 15px; }
.fix b { position: absolute; left: 1px; bottom: 2px; font-size: 5px; line-height: 5px; }
.thumb { position: absolute; right: 0; bottom: 3px; width: 4px; height: 16px; border-radius: 2px 0 0 2px; background: #808080; }

.status { display: flex; align-items: center; gap: 11px; height: 15px; padding: 0 15px 0 14px; border-top: 1px solid #c8c8c8; border-radius: 0 0 4px 4px; background: linear-gradient(#dedcde, #cfcdcf); color: #4a4a4a; font-weight: 400; }
.status-right { display: flex; align-items: center; margin-left: auto; }
.status .glyph { width: 11px; height: 9px; }
.focus { gap: 4px; margin-right: 7px; }
.view { width: 23px; height: 14px; justify-content: center; }
.view.on { background: #9c9a9c; }
.step { width: 12px; justify-content: center; font-size: 11px; }
.status input { appearance: none; width: 64px; height: 10px; margin: 0 2px; background: linear-gradient(#999, #999) center / 100% 2px no-repeat; }
.status input::-webkit-slider-thumb { appearance: none; width: 10px; height: 10px; border-radius: 50%; background: #fff; }
.percent { margin-left: 8px; }

.dock-area { display: flex; justify-content: center; padding: 1px 0; height: 21px; }
.dock { display: flex; align-items: center; width: 594px; height: 19px; padding: 0 1px; border-radius: 4px; background: #5d5b5d; border: 1px solid #767476; }
.dock-item { flex: 1; display: flex; flex-direction: column; align-items: center; }
.dock-item::after { content: ""; width: 2px; height: 2px; margin-top: 2px; }
.dock-item.running::after { background: #111; }
.dock-icon { width: 11px; height: 11px; margin-top: 2px; overflow: visible; }
.dock-sep { width: 1px; height: 13px; margin: 0 3px 0 2px; background: #3a383a; }

.viewing { position: absolute; top: 0; left: 50%; transform: translateX(-50%); display: flex; height: 22px; font: 14px/20px "Open Sans", "Noto Sans", sans-serif; white-space: nowrap; }
.viewing-text { display: flex; align-items: center; padding: 0 8px 2px 7px; border-radius: 0 0 0 3px; background: rgba(104, 186, 50, .95); color: #24401a; }
.viewing-text .glyph { margin-left: 3px; }
.viewing-text b { font: 700 9px/12px Inter, sans-serif; color: #3c4a33; }
.rec-dot.live { margin: 0 4px 0 7px; width: 6px; background: #fb5347; }
.options { gap: 2px; padding: 0 6px 2px 5px; border-radius: 0 0 3px 0; background: #242526; color: #fff; }

.controls { display: grid; grid-template-columns: 1fr auto 1fr; align-items: center; height: 47px; padding: 0 14px 0 7px; background: linear-gradient(#27292b, #1d1f20); color: #8e8e8e; font-size: 11px; }
.audio { gap: 12px; padding-top: 2px; }
.audio .glyph { margin-bottom: 7px; }
.actions { display: flex; margin-right: 9px; }
.action { flex-direction: column; justify-content: space-between; width: 76px; height: 47px; padding-top: 6px; }
.chat { width: 24px; height: 20px; }
.moredots { width: 24px; height: 8px; margin-top: 6px; }
.leave { justify-self: end; width: 63px; height: 25px; justify-content: center; border-radius: 8px; background: #e02828; color: #fff; font-size: 12px; font-weight: 700; }

.taskbar { display: flex; height: 40px; background: linear-gradient(to right, #1c1c1c, #282727 35%, #302a2b); color: #fff; }
.task { width: 48px; height: 40px; justify-content: center; }
.task-search { display: flex; align-items: center; gap: 10px; width: 344px; padding-left: 11px; border: 1px solid #c0c0c0; background: #f2f2f2; font-size: 14px; }
.task-search input { flex: 1; min-width: 0; padding: 0; border: 0; outline: 0; background: none; font: inherit; }
.task-search input::placeholder { color: #2c2c2c; opacity: 1; }
.task-apps { display: flex; gap: 1px; margin-left: 3px; }
.task.open { background: #565455; border-bottom: 2px solid #76b9ed; }
.tray { display: flex; align-items: center; margin-left: auto; gap: 7px; font-size: 11px; }
.charge { position: relative; width: 49px; height: 20px; margin-right: 18px; border: 2px solid #fff; background: linear-gradient(to right, #189c48 70%, #000 70%); font-size: 13px; line-height: 16px; text-align: center; }
.charge::after { content: ""; position: absolute; right: -4px; top: 4px; width: 2px; height: 8px; background: #fff; }
.lang { text-align: center; margin-left: 5px; line-height: 18px; }
.clock { text-align: center; margin-left: 6px; line-height: 18px; }
.notice { margin: 0 12px 0 9px; }
.desk { width: 1px; height: 40px; margin-right: 4px; background: #6a6667; }
</style>
